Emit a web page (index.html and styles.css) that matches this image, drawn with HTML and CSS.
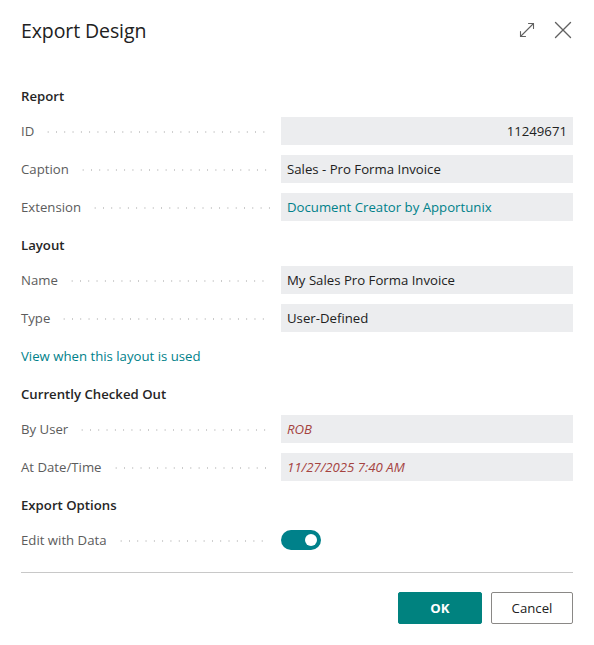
FILE: index.html
```html
<!DOCTYPE html>
<html lang="en">
<head>
<meta charset="utf-8">
<title>Export Design</title>
<link rel="stylesheet" href="styles.css">
</head>
<body>
<div class="dialog">
  <header class="header">
    <h1 class="title">Export Design</h1>
    <div class="header-actions">
      <button class="icon-btn" aria-label="Expand">
        <svg width="18" height="18" viewBox="0 0 18 18" fill="none" stroke="#616161" stroke-width="1.1" stroke-linecap="round" stroke-linejoin="round">
          <path d="M2.5 15.5 L15.5 2.5"/>
          <path d="M10.5 2.5 H15.5 V7.5"/>
          <path d="M2.5 10.5 V15.5 H7.5"/>
        </svg>
      </button>
      <button class="icon-btn" aria-label="Close">
        <svg width="18" height="18" viewBox="0 0 18 18" fill="none" stroke="#616161" stroke-width="1.4" stroke-linecap="round">
          <path d="M1.5 1.5 L16.5 16.5"/>
          <path d="M16.5 1.5 L1.5 16.5"/>
        </svg>
      </button>
    </div>
  </header>

  <main class="body">
    <h2 class="group first">Report</h2>
    <div class="row"><span class="label"><span class="caption">ID</span><span class="dots"></span></span><span class="field num">11249671</span></div>
    <div class="row"><span class="label"><span class="caption">Caption</span><span class="dots"></span></span><span class="field">Sales - Pro Forma Invoice</span></div>
    <div class="row"><span class="label"><span class="caption">Extension</span><span class="dots"></span></span><span class="field link">Document Creator by Apportunix</span></div>

    <h2 class="group">Layout</h2>
    <div class="row"><span class="label"><span class="caption">Name</span><span class="dots"></span></span><span class="field">My Sales Pro Forma Invoice</span></div>
    <div class="row"><span class="label"><span class="caption">Type</span><span class="dots"></span></span><span class="field">User-Defined</span></div>
    <div class="link-row"><a class="action-link" href="#">View when this layout is used</a></div>

    <h2 class="group">Currently Checked Out</h2>
    <div class="row"><span class="label"><span class="caption">By User</span><span class="dots"></span></span><span class="field warn">ROB</span></div>
    <div class="row"><span class="label"><span class="caption">At Date/Time</span><span class="dots"></span></span><span class="field warn">11/27/2025 7:40 AM</span></div>

    <h2 class="group">Export Options</h2>
    <div class="row"><span class="label"><span class="caption">Edit with Data</span><span class="dots"></span></span><span class="toggle-cell"><span class="toggle"><span class="knob"></span></span></span></div>
  </main>

  <footer class="footer">
    <button class="btn primary">OK</button>
    <button class="btn">Cancel</button>
  </footer>
</div>
</body>
</html>
```

FILE: styles.css
```css
* { box-sizing: border-box; }
html, body { margin: 0; padding: 0; background: #ffffff; }
body {
  font-family: "Open Sans", "Noto Sans", "Liberation Sans", sans-serif;
  font-size: 13.2px;
  color: #212121;
}
.dialog { width: 594px; padding: 0 21px; }

.header {
  height: 60px;
  display: flex;
  align-items: center;
  justify-content: space-between;
}
.title {
  margin: 0;
  font-size: 19.5px;
  font-weight: 500;
  color: #212121;
  letter-spacing: -0.1px;
}
.header-actions { display: flex; gap: 18px; align-items: center; margin-right: 1px; }
.icon-btn {
  border: 0; background: none; padding: 0; width: 18px; height: 18px;
  display: flex; align-items: center; justify-content: center;
}

.body { padding-top: 22px; }
.group {
  margin: 14px 0 11px;
  height: 20px;
  line-height: 20px;
  font-size: 13.2px;
  font-weight: 600;
  color: #262626;
}
.group.first { margin-top: 4px; }
.row {
  display: grid;
  grid-template-columns: 249px 292px;
  column-gap: 11px;
  height: 28px;
  margin-bottom: 10px;
  align-items: center;
}
.label {
  display: flex;
  align-items: center;
  color: #5c5c5c;
  height: 28px;
}
.caption { white-space: nowrap; }
.dots {
  flex: 1;
  margin-left: 10px;
  height: 2px;
  margin-top: 2px;
  background-image: radial-gradient(circle, #cacaca 0.9px, transparent 1px);
  background-size: 8.3px 2px;
  background-repeat: repeat-x;
  background-position: left center;
}
.field {
  height: 28px;
  line-height: 28px;
  background: #ecedef;
  padding: 0 6px;
  color: #212121;
  white-space: nowrap;
  overflow: hidden;
}
.field.num { text-align: right; }
.field.link { color: #00818a; }
.field.warn { color: #a5433f; font-style: italic; }

.link-row { height: 28px; margin-bottom: 10px; display: flex; align-items: center; }
.action-link { color: #00818a; text-decoration: none; }

.toggle-cell { display: flex; align-items: center; height: 28px; }
.toggle {
  width: 40px; height: 20px; border-radius: 10px;
  background: #00818a;
  position: relative;
}
.knob {
  position: absolute; top: 4px; right: 4px;
  width: 12px; height: 12px; border-radius: 50%;
  background: #ffffff;
}

.footer {
  margin-top: 18px;
  border-top: 1px solid #c8c8c8;
  padding-top: 19px;
  display: flex;
  justify-content: flex-end;
  gap: 9px;
}
.btn {
  font-family: inherit;
  font-size: 13.2px;
  height: 32px;
  width: 82px;
  border: 1px solid #8a8886;
  border-radius: 2px;
  background: #ffffff;
  color: #212121;
}
.btn.primary {
  width: 84px;
  background: #00827f;
  border-color: #00827f;
  color: #ffffff;
  font-weight: 700;
}
```
